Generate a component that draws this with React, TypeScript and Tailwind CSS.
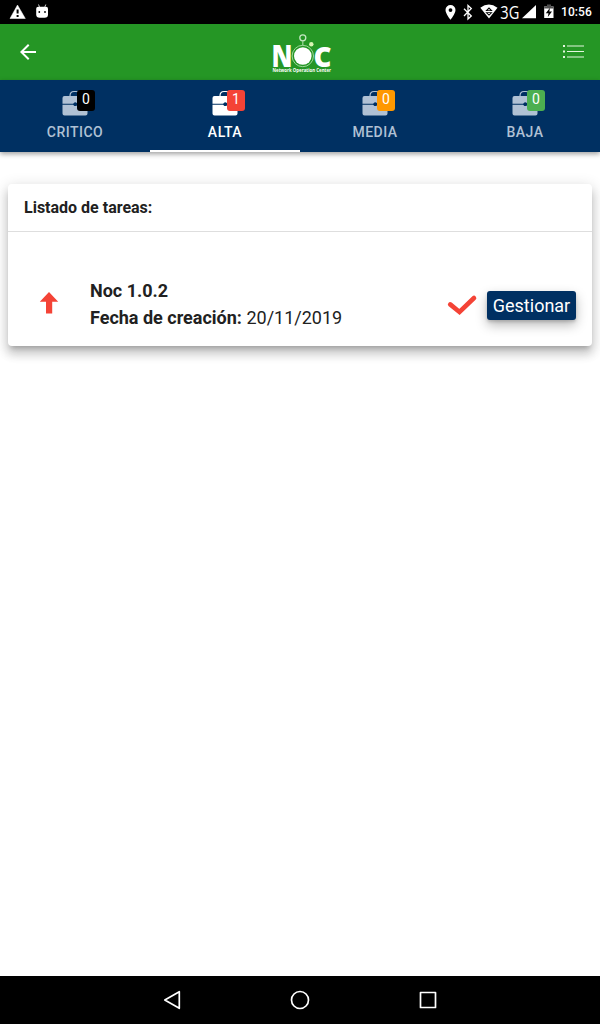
import type { ReactNode } from "react";

type Tab = { label: string; count: number; badge: string; active?: boolean };

const tabs: Tab[] = [
  { label: "CRITICO", count: 0, badge: "bg-black" },
  { label: "ALTA", count: 1, badge: "bg-[#f44336]", active: true },
  { label: "MEDIA", count: 0, badge: "bg-[#ff9800]" },
  { label: "BAJA", count: 0, badge: "bg-[#4caf50]" },
];

function StatusBar() {
  return (
    <div className="flex h-6 shrink-0 items-center justify-between bg-black px-2 text-white">
      <svg width="48" height="24" viewBox="8 0 48 24" fill="#fff">
        <path d="M17.5 5 25.3 18.5H10Z" stroke="#fff" strokeWidth=".5" strokeLinejoin="round" />
        <path d="M16.600 9.500h2v4h-2zM16.600 15h2v1.900h-2z" fill="#000" />
        <path d="M36.200 8.800q0-1.800 2-2h7.800q2 .2 2 2v5.700q0 3.300-3.500 3.300h-4.800q-3.500 0-3.500-3.300Z" />
        <path d="m39.500 7-1-2.500M44.800 7l1-2.500" stroke="#ccc" />
        <circle cx="39.300" cy="12" r=".9" fill="#000" />
        <circle cx="45" cy="12" r=".9" fill="#000" />
      </svg>
      <div className="flex items-center">
        <svg width="70" height="24" viewBox="430 0 70 24" fill="#fff">
          <path fillRule="evenodd" d="M450.500 5a5 5 0 0 0-5 5c0 3.700 5 9.800 5 9.800s5-6.100 5-9.800a5 5 0 0 0-5-5Zm0 3.200a1.900 1.900 0 1 1 0 3.800 1.900 1.900 0 0 1 0-3.800Z" />
          <path d="m464 8.800 7.300 7.300-3.300 3V5.500l3.300 3-7.300 7.500" fill="none" stroke="#fff" strokeWidth="1.300" />
          <path d="M480.300 7.800q8.500-6.400 17.200 0L489 18.500Z" />
          <path d="M485.300 10.900 489 7.300l3.700 3.600zM485.300 12.200h7.400L489 15.800Z" fill="#000" />
          <path d="M487.500 10.300 489 8.900l1.500 1.400zM487.500 12.900h3l-1.500 1.400z" fill="#fff" />
        </svg>
        <svg width="61" height="24" viewBox="500 0 61 24" fill="#fff">
          <text x="500.300" y="18.600" fontFamily="Open Sans, sans-serif" fontSize="17.500" textLength="19" lengthAdjust="spacingAndGlyphs">3G</text>
          <path d="M536 5v13.300h-14Z" />
          <path d="M547 5h4v1.500h2.500V18h-9.300V6.500h2.800Z" />
          <path d="M544.200 6.500h2.800V4.500h4v2h2.500v2h-9.300Z" fill="#505050" />
          <path d="m550 7.700-4.200 5.600h2.700l-.7 3.700 4.200-5.600h-2.700Z" fill="#000" />
        </svg>
        <span className="w-[31px] text-[12px] leading-6 font-medium tracking-[0.1px]">10:56</span>
      </div>
    </div>
  );
}

function Logo() {
  return (
    <svg className="overflow-visible" width="64" height="48" viewBox="268 28 64 48" fill="#fff" fontFamily="Open Sans, sans-serif" fontWeight="800">
      <text x="271.500" y="66.700" fontSize="29.500" textLength="21" lengthAdjust="spacingAndGlyphs">N</text>
      <text x="313.500" y="66.700" fontSize="28.500" textLength="18" lengthAdjust="spacingAndGlyphs">C</text>
      <circle cx="302.800" cy="56" r="10.700" stroke="#9fd69b" strokeWidth="1" fill="none" />
      <circle cx="302.800" cy="56" r="8.800" />
      <circle cx="302.800" cy="37.800" r="3" fill="none" stroke="#c5e7c3" strokeWidth="1.300" />
      <path d="M302.800 41V45.500" stroke="#9fd69b" strokeWidth="1.200" />
      <circle cx="311.300" cy="44.300" r="2.200" fill="#d9f5b4" />
      <text x="272.500" y="72" fontSize="4.800" fontWeight="700" textLength="58.500" lengthAdjust="spacingAndGlyphs">Network Operation Center</text>
    </svg>
  );
}

function Briefcase() {
  return (
    <svg width="26" height="26" viewBox="0 0 26 26" fill="currentColor">
      <path d="M8 6c0-3 1.400-4.500 4-4.500h2c2.600 0 4 1.500 4 4.500" fill="none" stroke="currentColor" strokeWidth="1.200" />
      <path d="M2.500 6h21q2 0 2 2v5.800h-10.200a2.100 2.100 0 0 0-3.900 0H.5V8Q.5 6 2.500 6Z" />
      <path d="M.5 14.700h10.900a2.100 2.100 0 0 0 3.900 0h10.200v8.900q0 2-2 2h-21q-2 0-2-2Z" />
      <circle cx="13.200" cy="14.200" r="1.700" fill="#003062" />
    </svg>
  );
}

function TabButton({ label, count, badge, active }: Tab) {
  return (
    <button
      className={`flex h-full flex-1 flex-col items-center border-b-2 pt-[10px] ${
        active ? "border-white text-white" : "border-transparent text-[#b0c1d4]"
      }`}
    >
      <span className="relative h-[26px] w-[26px]">
        <Briefcase />
        <span className={`absolute top-0 left-[15px] h-[21px] w-[18px] rounded-[3px] text-center text-[14px] leading-[19px] text-white ${badge}`}>
          {count}
        </span>
      </span>
      <span className="mt-[6px] text-[14px] leading-5 font-medium tracking-[0.5px]">{label}</span>
    </button>
  );
}

function NavSlot({ children }: { children: ReactNode }) {
  return (
    <svg width="24" height="24" viewBox="0 0 24 24" fill="none" stroke="#fff" strokeWidth="1.700" strokeLinejoin="round">
      {children}
    </svg>
  );
}

export default function App() {
  return (
    <div className="flex h-[1024px] w-[600px] flex-col overflow-hidden bg-white font-['Roboto',sans-serif] text-[#212121]">
      <StatusBar />
      <header className="flex h-14 shrink-0 items-center justify-between bg-[#259625] px-4">
        <svg width="24" height="24" viewBox="0 0 24 24" fill="#fff">
          <path d="M20 11H7.830l5.590-5.590L12 4l-8 8 8 8 1.410-1.410L7.830 13H20z" />
        </svg>
        <Logo />
        <svg width="24" height="24" viewBox="0 0 24 24" fill="#e4f6df">
          <path d="M3 5h2v2H3zM3 10.500h2v2H3zM3 16h2v2H3zM7 5.500h17v1H7zM7 11h17v1H7zM7 16.500h17v1H7z" />
        </svg>
      </header>
      <nav className="flex h-[72px] shrink-0 bg-[#003062] shadow-[0_2px_5px_rgba(0,0,0,0.38)]">
        {tabs.map((tab) => (
          <TabButton key={tab.label} {...tab} />
        ))}
      </nav>
      <main className="flex-1 px-2 pt-8">
        <section className="h-[162px] rounded-[4px] bg-white shadow-[0_5px_5px_-3px_rgba(0,0,0,0.2),0_8px_10px_1px_rgba(0,0,0,0.14),0_3px_14px_2px_rgba(0,0,0,0.12)]">
          <h1 className="h-12 border-b border-[#dedede] px-4 text-[16px] leading-[47px] font-bold">Listado de tareas:</h1>
          <div className="flex items-center pt-[45px] pr-4 pl-[29px]">
            <svg className="mb-0.5" width="24" height="24" viewBox="0 0 24 24" fill="#f44336">
              <path d="m12 .9 9.200 9.800h-6v11.800H9V10.700H2.800Z" />
            </svg>
            <div className="ml-[29px] flex-1 text-[18px] leading-[27px]">
              <p className="font-bold">Noc 1.0.2</p>
              <p>
                <b className="font-bold">Fecha de creación:</b> 20/11/2019
              </p>
            </div>
            <svg className="mt-0.5" width="32" height="24" viewBox="0 0 32 24" fill="none" stroke="#f44336" strokeWidth="4.600" strokeLinecap="round" strokeLinejoin="miter">
              <path d="m4.200 11.400 9.300 7.600L28 5" />
            </svg>
            <button className="mt-[3px] ml-[9px] h-[29px] w-[89px] rounded-[3px] bg-[#003062] pb-px text-[18px] leading-[27px] text-white shadow-[0_5px_12px_rgba(0,0,0,0.28),0_2px_3px_rgba(0,0,0,0.15)]">
              Gestionar
            </button>
          </div>
        </section>
      </main>
      <footer className="flex h-12 shrink-0 items-center justify-center gap-[104px] bg-black">
        <NavSlot>
          <path d="M19.300 3.700v16.600L4.800 12Z" />
        </NavSlot>
        <NavSlot>
          <circle cx="12" cy="12" r="8.500" />
        </NavSlot>
        <NavSlot>
          <path d="M4.500 4.500h15v15h-15z" />
        </NavSlot>
      </footer>
    </div>
  );
}
